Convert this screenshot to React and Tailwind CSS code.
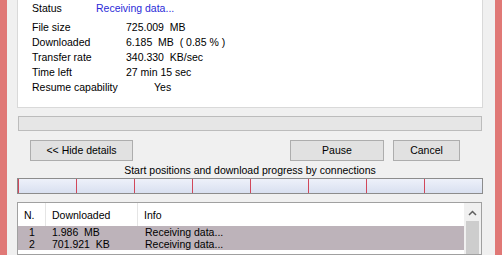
const details = [
  ['File size', '725.009  MB'],
  ['Downloaded', '6.185  MB  ( 0.85 % )'],
  ['Transfer rate', '340.330  KB/sec'],
  ['Time left', '27 min 15 sec'],
];

const connections = [
  ['1', '1.986  MB', 'Receiving data...'],
  ['2', '701.921  KB', 'Receiving data...'],
];

const App = () => {
  return (
    <div className="w-[502px] h-[255px] overflow-hidden flex bg-[#f0f0f0] text-[10.5px] text-black whitespace-pre font-['Liberation_Sans',Arial,sans-serif]">
      <div className="w-[7px] bg-[#e07876]" />

      <div className="flex-1 flex flex-col pl-[10px] pr-[12px]">
        {/* Details panel */}
        <div className="h-[109px] -mt-px border border-[#d9d9d9] bg-white pl-[14px] pr-2 shrink-0">
          <div className="flex h-[20px] leading-[16px]">
            <span className="w-[64px]">Status</span>
            <span className="text-[#2a2ad8]">Receiving data...</span>
          </div>
          {details.map(([label, value]) => (
            <div key={label} className="flex leading-[15px]">
              <span className="w-[94px]">{label}</span>
              <span>{value}</span>
            </div>
          ))}
          <div className="flex leading-[15px]">
            <span className="w-[122px]">Resume capability</span>
            <span>Yes</span>
          </div>
        </div>

        {/* Overall progress */}
        <div className="mt-[8px] h-[15px] ml-px mr-px border border-[#bcbcbc] bg-[#e6e6e6] shrink-0" />

        {/* Buttons */}
        <div className="mt-[9px] flex h-[21px] shrink-0">
          <button className="ml-[13px] w-[103px] border border-[#adadad] bg-[#e1e1e1] leading-[19px]">&lt;&lt; Hide details</button>
          <button className="ml-auto w-[94px] border border-[#adadad] bg-[#e1e1e1] leading-[19px]">Pause</button>
          <button className="ml-[9px] mr-[23px] w-[67px] border border-[#adadad] bg-[#e1e1e1] leading-[19px]">Cancel</button>
        </div>

        <div className="mt-[3px] text-center leading-[13px] shrink-0">Start positions and download progress by connections</div>

        {/* Connection bar */}
        <div className="mt-px h-[16px] border border-[#8c8c8c] bg-gradient-to-b from-[#eef1fa] to-[#d9e0f0] grid grid-cols-8 shrink-0">
          {Array.from({ length: 8 }).map((_, i) => (
            <div key={i} className="border-l border-[#d1485a]" />
          ))}
        </div>

        {/* Connections list */}
        <div className="mt-[8px] mr-px flex border border-[#a0a0a0] bg-white flex-1">
          <div className="flex-1 flex flex-col">
            <div className="flex h-[23px] leading-[25px]">
              <div className="w-[28px] pl-[6px] border-r border-[#e5e5e5]">N.</div>
              <div className="w-[92px] pl-[6px] border-r border-[#e5e5e5]">Downloaded</div>
              <div className="flex-1 pl-[6px]">Info</div>
            </div>
            {connections.map(([n, size, info]) => (
              <div key={n} className="flex h-[12px] leading-[13px] bg-[#bdb3ba]">
                <div className="w-[28px] pl-[11px]">{n}</div>
                <div className="w-[92px] pl-[6px]">{size}</div>
                <div className="flex-1 pl-[7px]">{info}</div>
              </div>
            ))}
          </div>
          <div className="w-[17px] bg-[#f0f0f0] flex flex-col items-center">
            <svg width="9" height="6" viewBox="0 0 9 6" className="mt-[7px]">
              <path d="M1 5 L4.5 1.5 L8 5" fill="none" stroke="#606060" strokeWidth="1.5" />
            </svg>
            <div className="mt-[5px] w-[13px] flex-1 bg-[#cdcdcd]" />
          </div>
        </div>
      </div>

      <div className="w-[7px] bg-[#e07876]" />
    </div>
  );
};

export default App;
